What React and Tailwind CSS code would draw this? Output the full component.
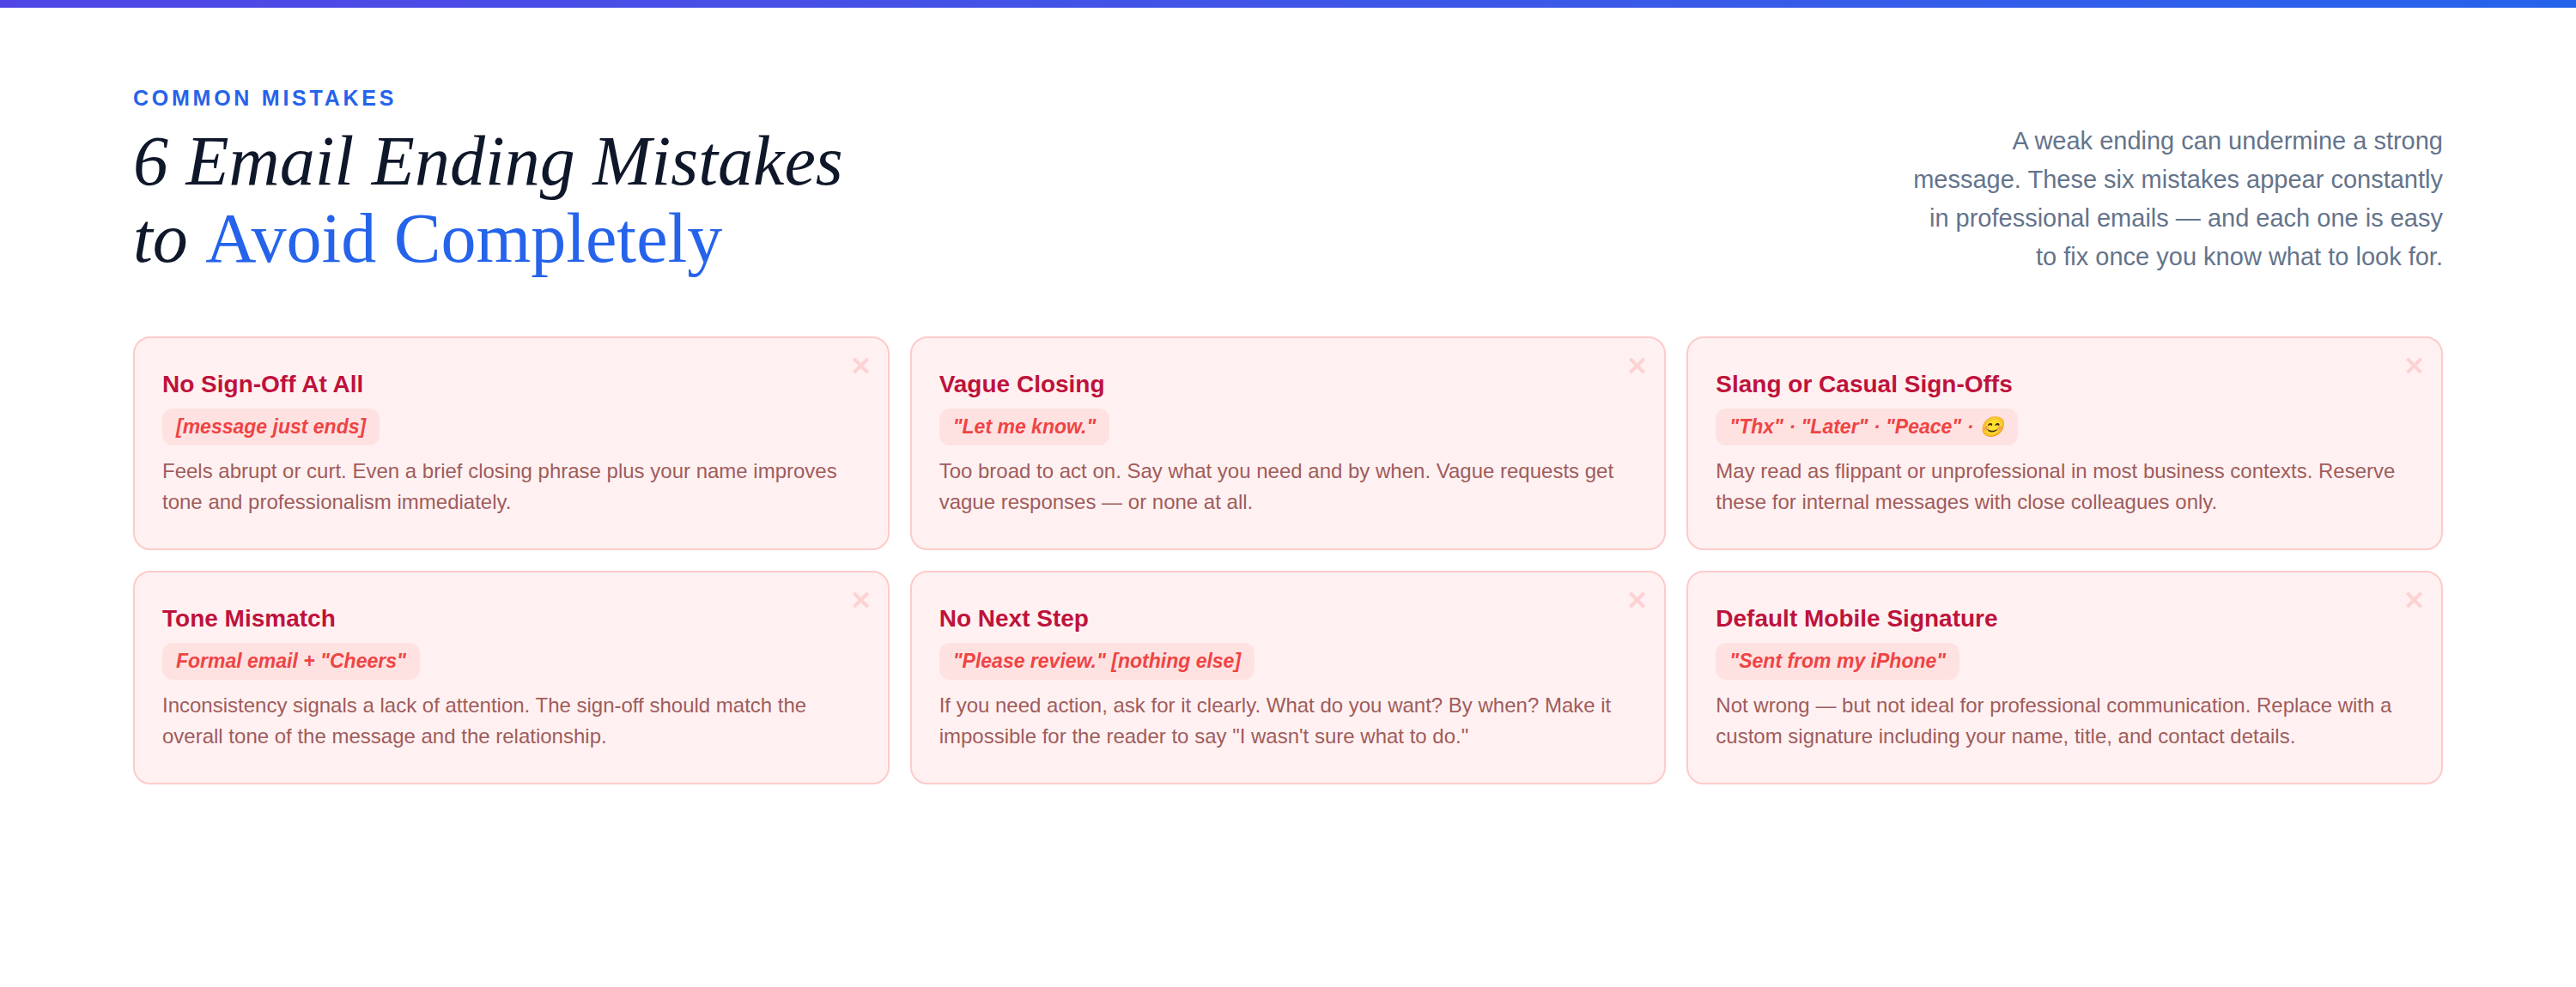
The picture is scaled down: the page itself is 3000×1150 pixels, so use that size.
const mistakes = [
  {
    title: 'No Sign-Off At All',
    tag: '[message just ends]',
    text: 'Feels abrupt or curt. Even a brief closing phrase plus your name improves tone and professionalism immediately.',
  },
  {
    title: 'Vague Closing',
    tag: '"Let me know."',
    text: 'Too broad to act on. Say what you need and by when. Vague requests get vague responses — or none at all.',
  },
  {
    title: 'Slang or Casual Sign-Offs',
    tag: '"Thx" · "Later" · "Peace" · 😊',
    text: 'May read as flippant or unprofessional in most business contexts. Reserve these for internal messages with close colleagues only.',
  },
  {
    title: 'Tone Mismatch',
    tag: 'Formal email + "Cheers"',
    text: 'Inconsistency signals a lack of attention. The sign-off should match the overall tone of the message and the relationship.',
  },
  {
    title: 'No Next Step',
    tag: '"Please review." [nothing else]',
    text: 'If you need action, ask for it clearly. What do you want? By when? Make it impossible for the reader to say "I wasn\'t sure what to do."',
  },
  {
    title: 'Default Mobile Signature',
    tag: '"Sent from my iPhone"',
    text: 'Not wrong — but not ideal for professional communication. Replace with a custom signature including your name, title, and contact details.',
  },
];

const MistakeCard = ({ title, tag, text }) => (
  <div className="relative h-[249px] rounded-[20px] border-2 border-[#fecaca] bg-[#fff1f1] px-[32px] pt-[34px]">
    <span className="absolute right-[19px] top-[12px] text-[30px] font-bold leading-[42px] text-[#fdd2d2]">✕</span>
    <h3 className="text-[28px] font-bold leading-[40px] text-[#be123c]">{title}</h3>
    <div className="mt-[8px] w-fit rounded-[12px] bg-[#fee2e2] px-[16px] py-[4px] text-[23px] font-semibold italic leading-[35px] text-[#ef4444]">
      {tag}
    </div>
    <p className="mt-[12px] text-[24px] leading-[36px] text-[#a05c5c]">{text}</p>
  </div>
);

export default function App() {
  return (
    <div className="min-h-screen bg-white font-['Liberation_Sans',sans-serif]">
      {/* Top bar */}
      <div className="h-[9px] bg-gradient-to-r from-[#4f46e5] to-[#2563eb]" />

      <main className="px-[155px] pt-[87px]">
        <div className="flex items-end justify-between">
          <div>
            <div className="text-[25px] font-bold leading-[36px] tracking-[0.15em] text-[#2563eb]">COMMON MISTAKES</div>
            <h1 className="mt-[11px] font-['Liberation_Serif',serif] text-[82px] font-normal italic leading-[90px] text-[#0f172a]">
              6 Email Ending Mistakes
              <br />
              to <span className="not-italic text-[#2563eb]">Avoid Completely</span>
            </h1>
          </div>
          <p className="mb-[1px] w-[620px] text-right text-[29px] leading-[45px] text-[#64748b]">
            A weak ending can undermine a strong message. These six mistakes appear constantly in professional emails — and each one is easy to fix once you know what to look for.
          </p>
        </div>

        <div className="mt-[69px] grid grid-cols-3 gap-[24px]">
          {mistakes.map((m) => (
            <MistakeCard key={m.title} {...m} />
          ))}
        </div>
      </main>
    </div>
  );
}
